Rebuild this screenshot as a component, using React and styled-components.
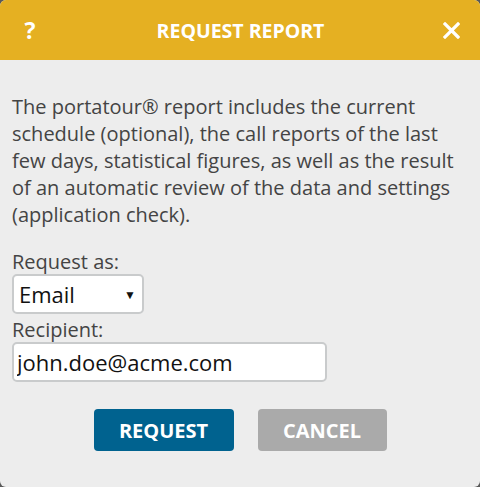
import React from 'react';
import styled, {createGlobalStyle} from 'styled-components';

const GlobalStyle = createGlobalStyle`
  html, body {
    margin: 0;
    padding: 0;
    background: #595959;
  }
  body {
    font-family: "Open Sans", "Liberation Sans", sans-serif;
  }
`;

const Dialog = styled.div`
  width: 480px;
  height: 487px;
  background: #ededed;
  border-radius: 6px;
  overflow: hidden;
  display: flex;
  flex-direction: column;
`;

const Header = styled.header`
  height: 60px;
  background: #e5b022;
  color: #fff;
  display: flex;
  align-items: center;
  justify-content: space-between;
  padding: 0 20px 0 21px;
`;

const HeaderIcon = styled.span`
  width: 18px;
  display: flex;
  justify-content: center;
  font-weight: 700;
  font-size: 23px;
`;

const Title = styled.h1`
  margin: 0;
  font-size: 19.5px;
  font-weight: 700;
`;

const Body = styled.div`
  padding: 33px 12px 0;
  color: #444;
  font-size: 20px;
`;

const Intro = styled.p`
  margin: 0 0 22px;
  line-height: 27px;
`;

const Label = styled.label`
  display: block;
  line-height: 24px;
  margin-top: ${({$gap}) => $gap || 0}px;
`;

const SelectWrap = styled.div`
  position: relative;
  width: 132px;
`;

const Select = styled.select`
  appearance: none;
  width: 100%;
  height: 40px;
  box-sizing: border-box;
  border: 2px solid #c9cbcc;
  border-radius: 5px;
  background: #fff;
  padding: 0 0 0 5px;
  font-family: inherit;
  font-size: 22px;
  color: #111;
  outline: none;
`;

const Arrow = styled.span`
  position: absolute;
  right: 8px;
  top: 50%;
  transform: translateY(-50%);
  font-size: 12px;
  color: #111;
  pointer-events: none;
`;

const Input = styled.input`
  display: block;
  width: 315px;
  height: 40px;
  box-sizing: border-box;
  border: 2px solid #c9cbcc;
  border-radius: 5px;
  background: #fff;
  padding: 0 0 0 3px;
  font-family: inherit;
  font-size: 22px;
  color: #111;
  outline: none;
`;

const Actions = styled.div`
  display: flex;
  justify-content: center;
  gap: 24px;
  margin-top: 27px;
`;

const Button = styled.button`
  width: ${({$width}) => $width}px;
  height: 42px;
  border: none;
  border-radius: 4px;
  background: ${({$primary}) => ($primary ? '#00628f' : '#aaaaaa')};
  color: #fff;
  font-family: inherit;
  font-size: 20px;
  font-weight: 700;
  cursor: pointer;
`;

const CloseIcon = () => (
  <svg width="17" height="17" viewBox="0 0 17 17">
    <path d="M2 2 L15 15 M15 2 L2 15" stroke="#fff" strokeWidth="3.2" strokeLinecap="square" />
  </svg>
);

const App = () => (
  <>
    <GlobalStyle />
    <Dialog>
      <Header>
        <HeaderIcon>?</HeaderIcon>
        <Title>REQUEST REPORT</Title>
        <HeaderIcon><CloseIcon /></HeaderIcon>
      </Header>
      <Body>
        <Intro>
          The portatour® report includes the current schedule (optional), the call reports of the last
          few days, statistical figures, as well as the result of an automatic review of the data and
          settings (application check).
        </Intro>
        <Label>Request as:</Label>
        <SelectWrap>
          <Select defaultValue="email">
            <option value="email">Email</option>
            <option value="download">Download</option>
          </Select>
          <Arrow>▼</Arrow>
        </SelectWrap>
        <Label $gap={4}>Recipient:</Label>
        <Input defaultValue="john.doe@acme.com" />
        <Actions>
          <Button $primary $width={140}>REQUEST</Button>
          <Button $width={129}>CANCEL</Button>
        </Actions>
      </Body>
    </Dialog>
  </>
);

export default App;
